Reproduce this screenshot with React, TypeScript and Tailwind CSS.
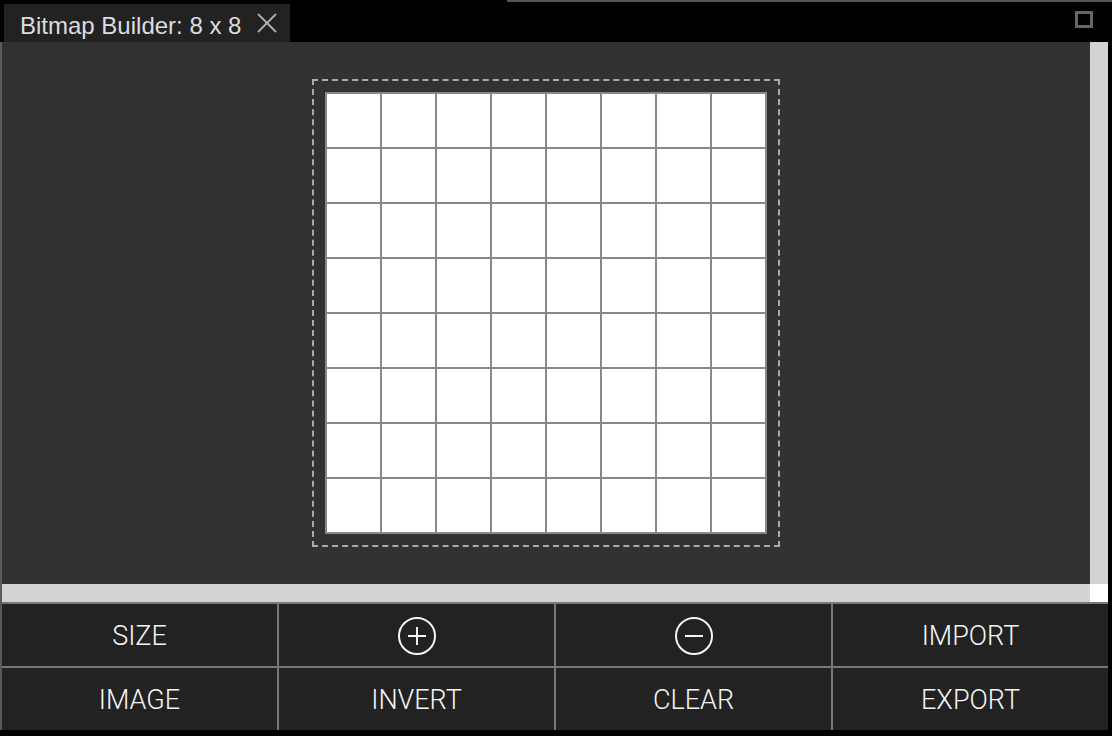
import React from "react";

const Cell = () => <div className="w-[53px] h-[53px] bg-white" />;

function CircleIcon({ plus }: { plus: boolean }) {
  return (
    <svg width="40" height="40" viewBox="0 0 40 40" fill="none" stroke="#f5f5f5" strokeWidth="2">
      <circle cx="20" cy="20" r="18" />
      <line x1="11" y1="20" x2="29" y2="20" />
      {plus && <line x1="20" y1="11" x2="20" y2="29" />}
    </svg>
  );
}

function Btn({ children }: { children: React.ReactNode }) {
  return (
    <div className="bg-[#222222] flex items-center justify-center text-[27px] font-light text-[#f5f5f5] h-[62px] pt-[2px]" style={{ fontFamily: "Roboto, 'Liberation Sans', sans-serif" }}>
      {children}
    </div>
  );
}

export default function App() {
  return (
    <div className="w-[1112px] h-[736px] bg-black flex flex-col overflow-hidden">
      {/* Title bar */}
      <div className="relative h-[42px] flex">
        <div className="absolute top-0 left-[507px] right-0 h-[2px] bg-[#555555]" />
        <div className="mt-[4px] ml-[4px] h-[38px] w-[286px] bg-[#222222] flex items-center pl-[16px] pt-[5px]">
          <span className="text-[24px] text-[#dddddd] leading-none" style={{ fontFamily: "'Liberation Sans', Arial, sans-serif" }}>
            Bitmap Builder: 8 x 8
          </span>
          <svg className="ml-[16px] -mt-[6px]" width="20" height="20" viewBox="0 0 20 20" stroke="#b0b0b0" strokeWidth="1.8">
            <line x1="1" y1="1" x2="19" y2="19" />
            <line x1="19" y1="1" x2="1" y2="19" />
          </svg>
        </div>
        <div className="ml-auto mr-[19px] mt-[11px] w-[18px] h-[17px] border-[3px] border-[#666666] bg-black" />
      </div>

      {/* Middle */}
      <div className="flex h-[560px]">
        <div className="w-[2px] bg-[#5a5a5a]" />
        <div className="w-[1088px] flex flex-col">
          <div className="h-[542px] bg-[#323232] flex items-center justify-center">
            <div className="border-2 border-dashed border-[#aaaaaa] p-[11px]">
              <div className="grid grid-cols-8 gap-[2px] bg-[#888888] p-[2px]">
                {Array.from({ length: 64 }).map((_, i) => (
                  <Cell key={i} />
                ))}
              </div>
            </div>
          </div>
          <div className="h-[18px] bg-[#d3d3d3]" />
        </div>
        <div className="w-[18px] flex flex-col">
          <div className="h-[542px] bg-[#d3d3d3]" />
          <div className="h-[18px] bg-white" />
        </div>
      </div>

      {/* Buttons */}
      <div className="flex">
        <div className="w-[2px] bg-[#5a5a5a]" />
        <div className="w-[1106px] bg-[#777777] pt-[2px] grid grid-cols-4 gap-[2px]">
          <Btn>SIZE</Btn>
          <Btn><CircleIcon plus /></Btn>
          <Btn><CircleIcon plus={false} /></Btn>
          <Btn>IMPORT</Btn>
          <Btn>IMAGE</Btn>
          <Btn>INVERT</Btn>
          <Btn>CLEAR</Btn>
          <Btn>EXPORT</Btn>
        </div>
      </div>
    </div>
  );
}
